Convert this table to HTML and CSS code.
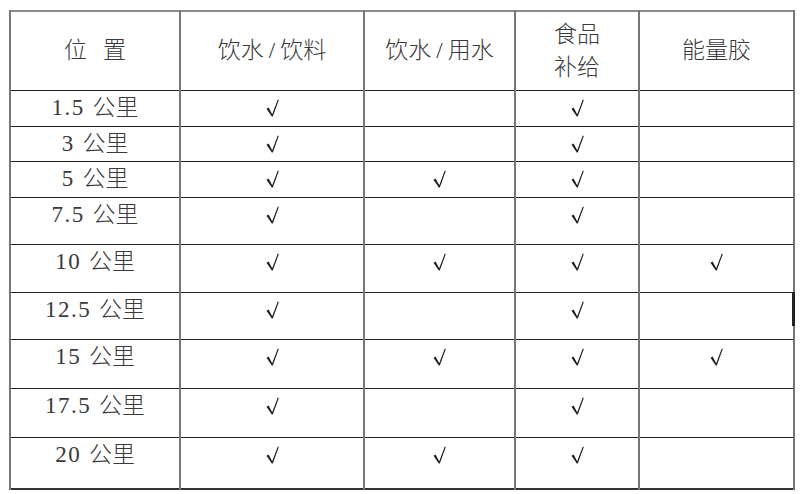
FILE: index.html
```html
<!DOCTYPE html>
<html lang="zh">
<head>
<meta charset="utf-8">
<title>补给站</title>
<link rel="stylesheet" href="styles.css">
</head>
<body>
<div class="page">
  <table class="supply">
    <colgroup>
      <col class="c1"><col class="c2"><col class="c3"><col class="c4"><col class="c5">
    </colgroup>
    <thead>
      <tr class="head">
        <th class="first"><span class="sp">位</span>置</th>
        <th>饮水<span class="sl">/</span>饮料</th>
        <th>饮水<span class="sl">/</span>用水</th>
        <th>食品<br>补给</th>
        <th>能量胶</th>
      </tr>
    </thead>
    <tbody>
      <tr class="h36">
        <td class="first"><span class="num">1.5</span> 公里</td>
        <td><svg class="ck" viewBox="0 0 13 18"><polygon points="0.5,9.8 2.6,8.6 6.2,15.2 11.8,0.6 12.8,1 6.8,17.6 5.8,17.6"/></svg></td>
        <td></td>
        <td><svg class="ck" viewBox="0 0 13 18"><polygon points="0.5,9.8 2.6,8.6 6.2,15.2 11.8,0.6 12.8,1 6.8,17.6 5.8,17.6"/></svg></td>
        <td></td>
      </tr>
      <tr class="h35">
        <td class="first"><span class="num">3</span> 公里</td>
        <td><svg class="ck" viewBox="0 0 13 18"><polygon points="0.5,9.8 2.6,8.6 6.2,15.2 11.8,0.6 12.8,1 6.8,17.6 5.8,17.6"/></svg></td>
        <td></td>
        <td><svg class="ck" viewBox="0 0 13 18"><polygon points="0.5,9.8 2.6,8.6 6.2,15.2 11.8,0.6 12.8,1 6.8,17.6 5.8,17.6"/></svg></td>
        <td></td>
      </tr>
      <tr class="h36">
        <td class="first"><span class="num">5</span> 公里</td>
        <td><svg class="ck" viewBox="0 0 13 18"><polygon points="0.5,9.8 2.6,8.6 6.2,15.2 11.8,0.6 12.8,1 6.8,17.6 5.8,17.6"/></svg></td>
        <td><svg class="ck" viewBox="0 0 13 18"><polygon points="0.5,9.8 2.6,8.6 6.2,15.2 11.8,0.6 12.8,1 6.8,17.6 5.8,17.6"/></svg></td>
        <td><svg class="ck" viewBox="0 0 13 18"><polygon points="0.5,9.8 2.6,8.6 6.2,15.2 11.8,0.6 12.8,1 6.8,17.6 5.8,17.6"/></svg></td>
        <td></td>
      </tr>
      <tr class="h47">
        <td class="first"><span class="num">7.5</span> 公里</td>
        <td><svg class="ck" viewBox="0 0 13 18"><polygon points="0.5,9.8 2.6,8.6 6.2,15.2 11.8,0.6 12.8,1 6.8,17.6 5.8,17.6"/></svg></td>
        <td></td>
        <td><svg class="ck" viewBox="0 0 13 18"><polygon points="0.5,9.8 2.6,8.6 6.2,15.2 11.8,0.6 12.8,1 6.8,17.6 5.8,17.6"/></svg></td>
        <td></td>
      </tr>
      <tr class="h48">
        <td class="first"><span class="num">10</span> 公里</td>
        <td><svg class="ck" viewBox="0 0 13 18"><polygon points="0.5,9.8 2.6,8.6 6.2,15.2 11.8,0.6 12.8,1 6.8,17.6 5.8,17.6"/></svg></td>
        <td><svg class="ck" viewBox="0 0 13 18"><polygon points="0.5,9.8 2.6,8.6 6.2,15.2 11.8,0.6 12.8,1 6.8,17.6 5.8,17.6"/></svg></td>
        <td><svg class="ck" viewBox="0 0 13 18"><polygon points="0.5,9.8 2.6,8.6 6.2,15.2 11.8,0.6 12.8,1 6.8,17.6 5.8,17.6"/></svg></td>
        <td><svg class="ck" viewBox="0 0 13 18"><polygon points="0.5,9.8 2.6,8.6 6.2,15.2 11.8,0.6 12.8,1 6.8,17.6 5.8,17.6"/></svg></td>
      </tr>
      <tr class="h47">
        <td class="first"><span class="num">12.5</span> 公里</td>
        <td><svg class="ck" viewBox="0 0 13 18"><polygon points="0.5,9.8 2.6,8.6 6.2,15.2 11.8,0.6 12.8,1 6.8,17.6 5.8,17.6"/></svg></td>
        <td></td>
        <td><svg class="ck" viewBox="0 0 13 18"><polygon points="0.5,9.8 2.6,8.6 6.2,15.2 11.8,0.6 12.8,1 6.8,17.6 5.8,17.6"/></svg></td>
        <td></td>
      </tr>
      <tr class="h49">
        <td class="first"><span class="num">15</span> 公里</td>
        <td><svg class="ck" viewBox="0 0 13 18"><polygon points="0.5,9.8 2.6,8.6 6.2,15.2 11.8,0.6 12.8,1 6.8,17.6 5.8,17.6"/></svg></td>
        <td><svg class="ck" viewBox="0 0 13 18"><polygon points="0.5,9.8 2.6,8.6 6.2,15.2 11.8,0.6 12.8,1 6.8,17.6 5.8,17.6"/></svg></td>
        <td><svg class="ck" viewBox="0 0 13 18"><polygon points="0.5,9.8 2.6,8.6 6.2,15.2 11.8,0.6 12.8,1 6.8,17.6 5.8,17.6"/></svg></td>
        <td><svg class="ck" viewBox="0 0 13 18"><polygon points="0.5,9.8 2.6,8.6 6.2,15.2 11.8,0.6 12.8,1 6.8,17.6 5.8,17.6"/></svg></td>
      </tr>
      <tr class="h49">
        <td class="first"><span class="num">17.5</span> 公里</td>
        <td><svg class="ck" viewBox="0 0 13 18"><polygon points="0.5,9.8 2.6,8.6 6.2,15.2 11.8,0.6 12.8,1 6.8,17.6 5.8,17.6"/></svg></td>
        <td></td>
        <td><svg class="ck" viewBox="0 0 13 18"><polygon points="0.5,9.8 2.6,8.6 6.2,15.2 11.8,0.6 12.8,1 6.8,17.6 5.8,17.6"/></svg></td>
        <td></td>
      </tr>
      <tr class="h52">
        <td class="first"><span class="num">20</span> 公里</td>
        <td><svg class="ck" viewBox="0 0 13 18"><polygon points="0.5,9.8 2.6,8.6 6.2,15.2 11.8,0.6 12.8,1 6.8,17.6 5.8,17.6"/></svg></td>
        <td><svg class="ck" viewBox="0 0 13 18"><polygon points="0.5,9.8 2.6,8.6 6.2,15.2 11.8,0.6 12.8,1 6.8,17.6 5.8,17.6"/></svg></td>
        <td><svg class="ck" viewBox="0 0 13 18"><polygon points="0.5,9.8 2.6,8.6 6.2,15.2 11.8,0.6 12.8,1 6.8,17.6 5.8,17.6"/></svg></td>
        <td></td>
      </tr>
    </tbody>
  </table>
  <div class="caret"></div>
</div>
</body>
</html>
```
FILE: styles.css
```css
html, body {
  margin: 0;
  padding: 0;
  background: #ffffff;
}

.page {
  position: relative;
  padding: 10px 0 0 9px;
  width: 800px;
  height: 494px;
  box-sizing: border-box;
}

.supply {
  border-collapse: collapse;
  table-layout: fixed;
  width: 784px;
  font-family: "Liberation Serif", "Noto Sans CJK SC", serif;
  font-size: 23px;
  font-weight: 300;
  color: #3a3a3a;
  border-top: 2px solid #8a8a8a;
  border-right: 2px solid #7a7a7a;
  border-left: 1px solid #333333;
  border-bottom: 2px solid #333333;
}

.c1 { width: 170px; }
.c2 { width: 184px; }
.c3 { width: 151px; }
.c4 { width: 124px; }
.c5 { width: 155px; }

.supply th,
.supply td {
  padding: 0;
  text-align: center;
  border-top: 1px solid #222222;
  border-bottom: 1px solid #222222;
  border-left: 2px solid #777777;
  border-right: 2px solid #777777;
}

.supply th.first,
.supply td.first {
  border-right: 1px solid #2a2a2a;
}

.supply th {
  font-weight: 300;
  vertical-align: middle;
  line-height: 33px;
}

.supply td {
  vertical-align: top;
  line-height: 34px;
}

.sp {
  margin-right: 16px;
}

.sl {
  margin: 0 5px;
  font-family: "Liberation Serif", serif;
}

.num {
  font-weight: 400;
  letter-spacing: 1.5px;
  margin-right: 2px;
}

.head { height: 79px; }
.h35 { height: 35px; }
.h36 { height: 36px; }
.h47 { height: 47px; }
.h48 { height: 48px; }
.h49 { height: 49px; }
.h52 { height: 52px; }

.ck {
  width: 13px;
  height: 18px;
  vertical-align: middle;
  fill: #1e1e1e;
  position: relative;
  top: -1px;
}

.caret {
  position: absolute;
  left: 792px;
  top: 292px;
  width: 3px;
  height: 34px;
  background: #222222;
}
```
